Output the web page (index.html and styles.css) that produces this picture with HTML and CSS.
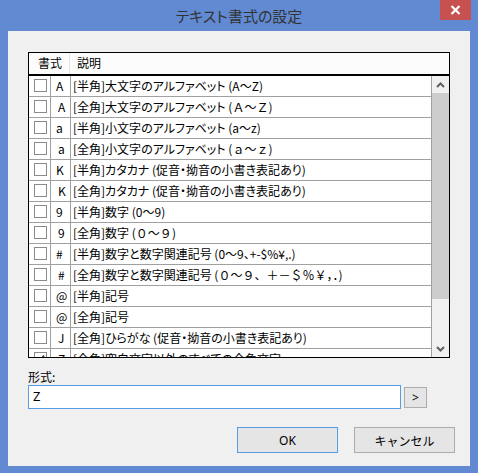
FILE: index.html
```html
<!DOCTYPE html>
<html lang="ja">
<head>
<meta charset="utf-8">
<title>テキスト書式の設定</title>
<link rel="stylesheet" href="styles.css">
</head>
<body>
<div class="window">
  <div class="titlebar">
    <span class="title">テキスト書式の設定</span>
    <div class="close">
      <svg width="11" height="10" viewBox="0 0 11 10"><path d="M1.5 1 L9.5 9 M9.5 1 L1.5 9" stroke="#fff" stroke-width="2.2" fill="none"/></svg>
    </div>
  </div>
  <div class="client">
    <div class="list">
      <div class="header">
        <div class="hcol hcol-fmt">書式</div>
        <div class="hcol hcol-desc">説明</div>
      </div>
      <div class="listbody">
        <div class="rows">
          <div class="row"><div class="c-chk"><span class="chk"></span></div><div class="c-fmt">A</div><div class="c-desc">[半角]大文字のアルファベット (A～Z)</div></div>
          <div class="row"><div class="c-chk"><span class="chk"></span></div><div class="c-fmt wide">A</div><div class="c-desc">[全角]大文字のアルファベット (<span class="fw">Ａ～Ｚ</span>)</div></div>
          <div class="row"><div class="c-chk"><span class="chk"></span></div><div class="c-fmt">a</div><div class="c-desc">[半角]小文字のアルファベット (a～z)</div></div>
          <div class="row"><div class="c-chk"><span class="chk"></span></div><div class="c-fmt wide">a</div><div class="c-desc">[全角]小文字のアルファベット (<span class="fw">ａ～ｚ</span>)</div></div>
          <div class="row"><div class="c-chk"><span class="chk"></span></div><div class="c-fmt">K</div><div class="c-desc">[半角]カタカナ (促音・拗音の小書き表記あり)</div></div>
          <div class="row"><div class="c-chk"><span class="chk"></span></div><div class="c-fmt wide">K</div><div class="c-desc">[全角]カタカナ (促音・拗音の小書き表記あり)</div></div>
          <div class="row"><div class="c-chk"><span class="chk"></span></div><div class="c-fmt">9</div><div class="c-desc">[半角]数字 (0～9)</div></div>
          <div class="row"><div class="c-chk"><span class="chk"></span></div><div class="c-fmt wide">9</div><div class="c-desc">[全角]数字 (<span class="fw">０～９</span>)</div></div>
          <div class="row"><div class="c-chk"><span class="chk"></span></div><div class="c-fmt">#</div><div class="c-desc">[半角]数字と数字関連記号 (0～9、+-$%¥,.)</div></div>
          <div class="row"><div class="c-chk"><span class="chk"></span></div><div class="c-fmt wide">#</div><div class="c-desc">[全角]数字と数字関連記号 (<span class="fw">０～９、＋－＄％￥，．</span>)</div></div>
          <div class="row"><div class="c-chk"><span class="chk"></span></div><div class="c-fmt">@</div><div class="c-desc">[半角]記号</div></div>
          <div class="row"><div class="c-chk"><span class="chk"></span></div><div class="c-fmt">@</div><div class="c-desc">[全角]記号</div></div>
          <div class="row"><div class="c-chk"><span class="chk"></span></div><div class="c-fmt wide">J</div><div class="c-desc">[全角]ひらがな (促音・拗音の小書き表記あり)</div></div>
          <div class="row"><div class="c-chk"><span class="chk checked"><svg width="11" height="11" viewBox="0 0 11 11"><path d="M2 5.5 L4.5 8 L9 2.5" stroke="#333" stroke-width="1.6" fill="none"/></svg></span></div><div class="c-fmt wide">Z</div><div class="c-desc">[全角]空白文字以外のすべての全角文字</div></div>
        </div>
        <div class="scrollbar">
          <div class="sb-arrow">
            <svg width="9" height="6" viewBox="0 0 9 6"><path d="M1 5 L4.5 1.5 L8 5" stroke="#606060" stroke-width="2" fill="none"/></svg>
          </div>
          <div class="sb-thumb"></div>
          <div class="sb-track"></div>
          <div class="sb-arrow">
            <svg width="9" height="6" viewBox="0 0 9 6"><path d="M1 1 L4.5 4.5 L8 1" stroke="#606060" stroke-width="2" fill="none"/></svg>
          </div>
        </div>
      </div>
    </div>
    <div class="label">形式:</div>
    <div class="inputrow">
      <div class="input">Z</div>
      <div class="smallbtn">&gt;</div>
    </div>
    <div class="buttons">
      <div class="btn btn-default">OK</div>
      <div class="btn">キャンセル</div>
    </div>
  </div>
</div>
</body>
</html>
```

FILE: styles.css
```css
html, body {
  margin: 0;
  padding: 0;
}
body {
  width: 478px;
  height: 473px;
  overflow: hidden;
  font-family: "Noto Sans CJK JP", "Noto Sans", sans-serif;
  font-size: 12px;
  color: #000;
}
.window {
  width: 478px;
  height: 473px;
  background: #618ad3;
  display: flex;
  flex-direction: column;
  position: relative;
}
.titlebar {
  height: 31px;
  display: flex;
  align-items: center;
  justify-content: center;
}
.title {
  font-size: 15px;
  color: #333;
  margin-top: -1px;
  font-feature-settings: "palt";
}
.close {
  position: absolute;
  top: 0;
  right: 7px;
  width: 31px;
  height: 20px;
  background: #c75050;
  display: flex;
  align-items: center;
  justify-content: center;
}
.client {
  margin: 0 8px 7px 8px;
  height: 435px;
  background: #f0f0f0;
  box-sizing: border-box;
  padding: 21px 15px 0 20px;
  display: flex;
  flex-direction: column;
}
.list {
  width: 422px;
  height: 306px;
  box-sizing: border-box;
  border: 1px solid #000;
  background: #fff;
  display: flex;
  flex-direction: column;
  overflow: hidden;
}
.header {
  height: 23px;
  flex: none;
  box-sizing: border-box;
  border-bottom: 2px solid #000;
  background: #fcfcfc;
  display: flex;
  align-items: center;
}
.hcol {
  height: 21px;
  line-height: 20px;
}
.hcol-fmt {
  width: 41px;
  box-sizing: border-box;
  padding-left: 9px;
  border-right: 1px solid #e5e5e5;
}
.hcol-desc {
  padding-left: 7px;
}
.listbody {
  flex: 1;
  display: flex;
  min-height: 0;
}
.rows {
  width: 403px;
  box-sizing: border-box;
  border-right: 1px solid #a0a0a0;
  overflow: hidden;
}
.row {
  height: 21px;
  box-sizing: border-box;
  border-bottom: 1px solid #a0a0a0;
  display: flex;
  white-space: nowrap;
}
.c-chk {
  width: 22px;
  box-sizing: border-box;
  border-right: 1px solid #a0a0a0;
  display: flex;
  justify-content: center;
  padding-top: 3px;
  padding-left: 1px;
}
.chk {
  width: 13px;
  height: 13px;
  box-sizing: border-box;
  border: 1px solid #8a8a8a;
  background: #fff;
  display: flex;
  align-items: center;
  justify-content: center;
}
.c-fmt {
  width: 20px;
  box-sizing: border-box;
  border-right: 1px solid #a0a0a0;
  padding-left: 5px;
  line-height: 20px;
}
.c-fmt.wide {
  padding-left: 7px;
}
.c-desc {
  padding-left: 2px;
  line-height: 20px;
  font-feature-settings: "palt";
}
.fw {
  font-feature-settings: normal;
}
.scrollbar {
  width: 17px;
  background: #f0f0f0;
  display: flex;
  flex-direction: column;
}
.sb-arrow {
  height: 17px;
  flex: none;
  display: flex;
  align-items: center;
  justify-content: center;
}
.sb-thumb {
  height: 206px;
  flex: none;
  background: #cdcdcd;
}
.sb-track {
  flex: 1;
}
.label {
  margin-top: 11px;
  height: 16px;
  line-height: 16px;
}
.inputrow {
  display: flex;
  align-items: center;
  gap: 3px;
}
.input {
  width: 373px;
  height: 24px;
  box-sizing: border-box;
  border: 1px solid #569de5;
  background: #fff;
  padding-left: 4px;
  line-height: 21px;
  font-family: "Noto Sans", sans-serif;
  font-size: 13px;
}
.smallbtn {
  width: 23px;
  height: 21px;
  box-sizing: border-box;
  border: 1px solid #acacac;
  background: #e5e5e5;
  display: flex;
  align-items: center;
  justify-content: center;
  font-family: "Noto Sans", sans-serif;
  font-size: 12px;
}
.buttons {
  margin-top: 18px;
  display: flex;
  justify-content: flex-end;
  gap: 16px;
}
.btn {
  width: 101px;
  height: 26px;
  box-sizing: border-box;
  border: 1px solid #acacac;
  background: #e5e5e5;
  display: flex;
  align-items: center;
  justify-content: center;
}
.btn-default {
  border-color: #569de5;
  font-family: "Noto Sans", sans-serif;
}
```
